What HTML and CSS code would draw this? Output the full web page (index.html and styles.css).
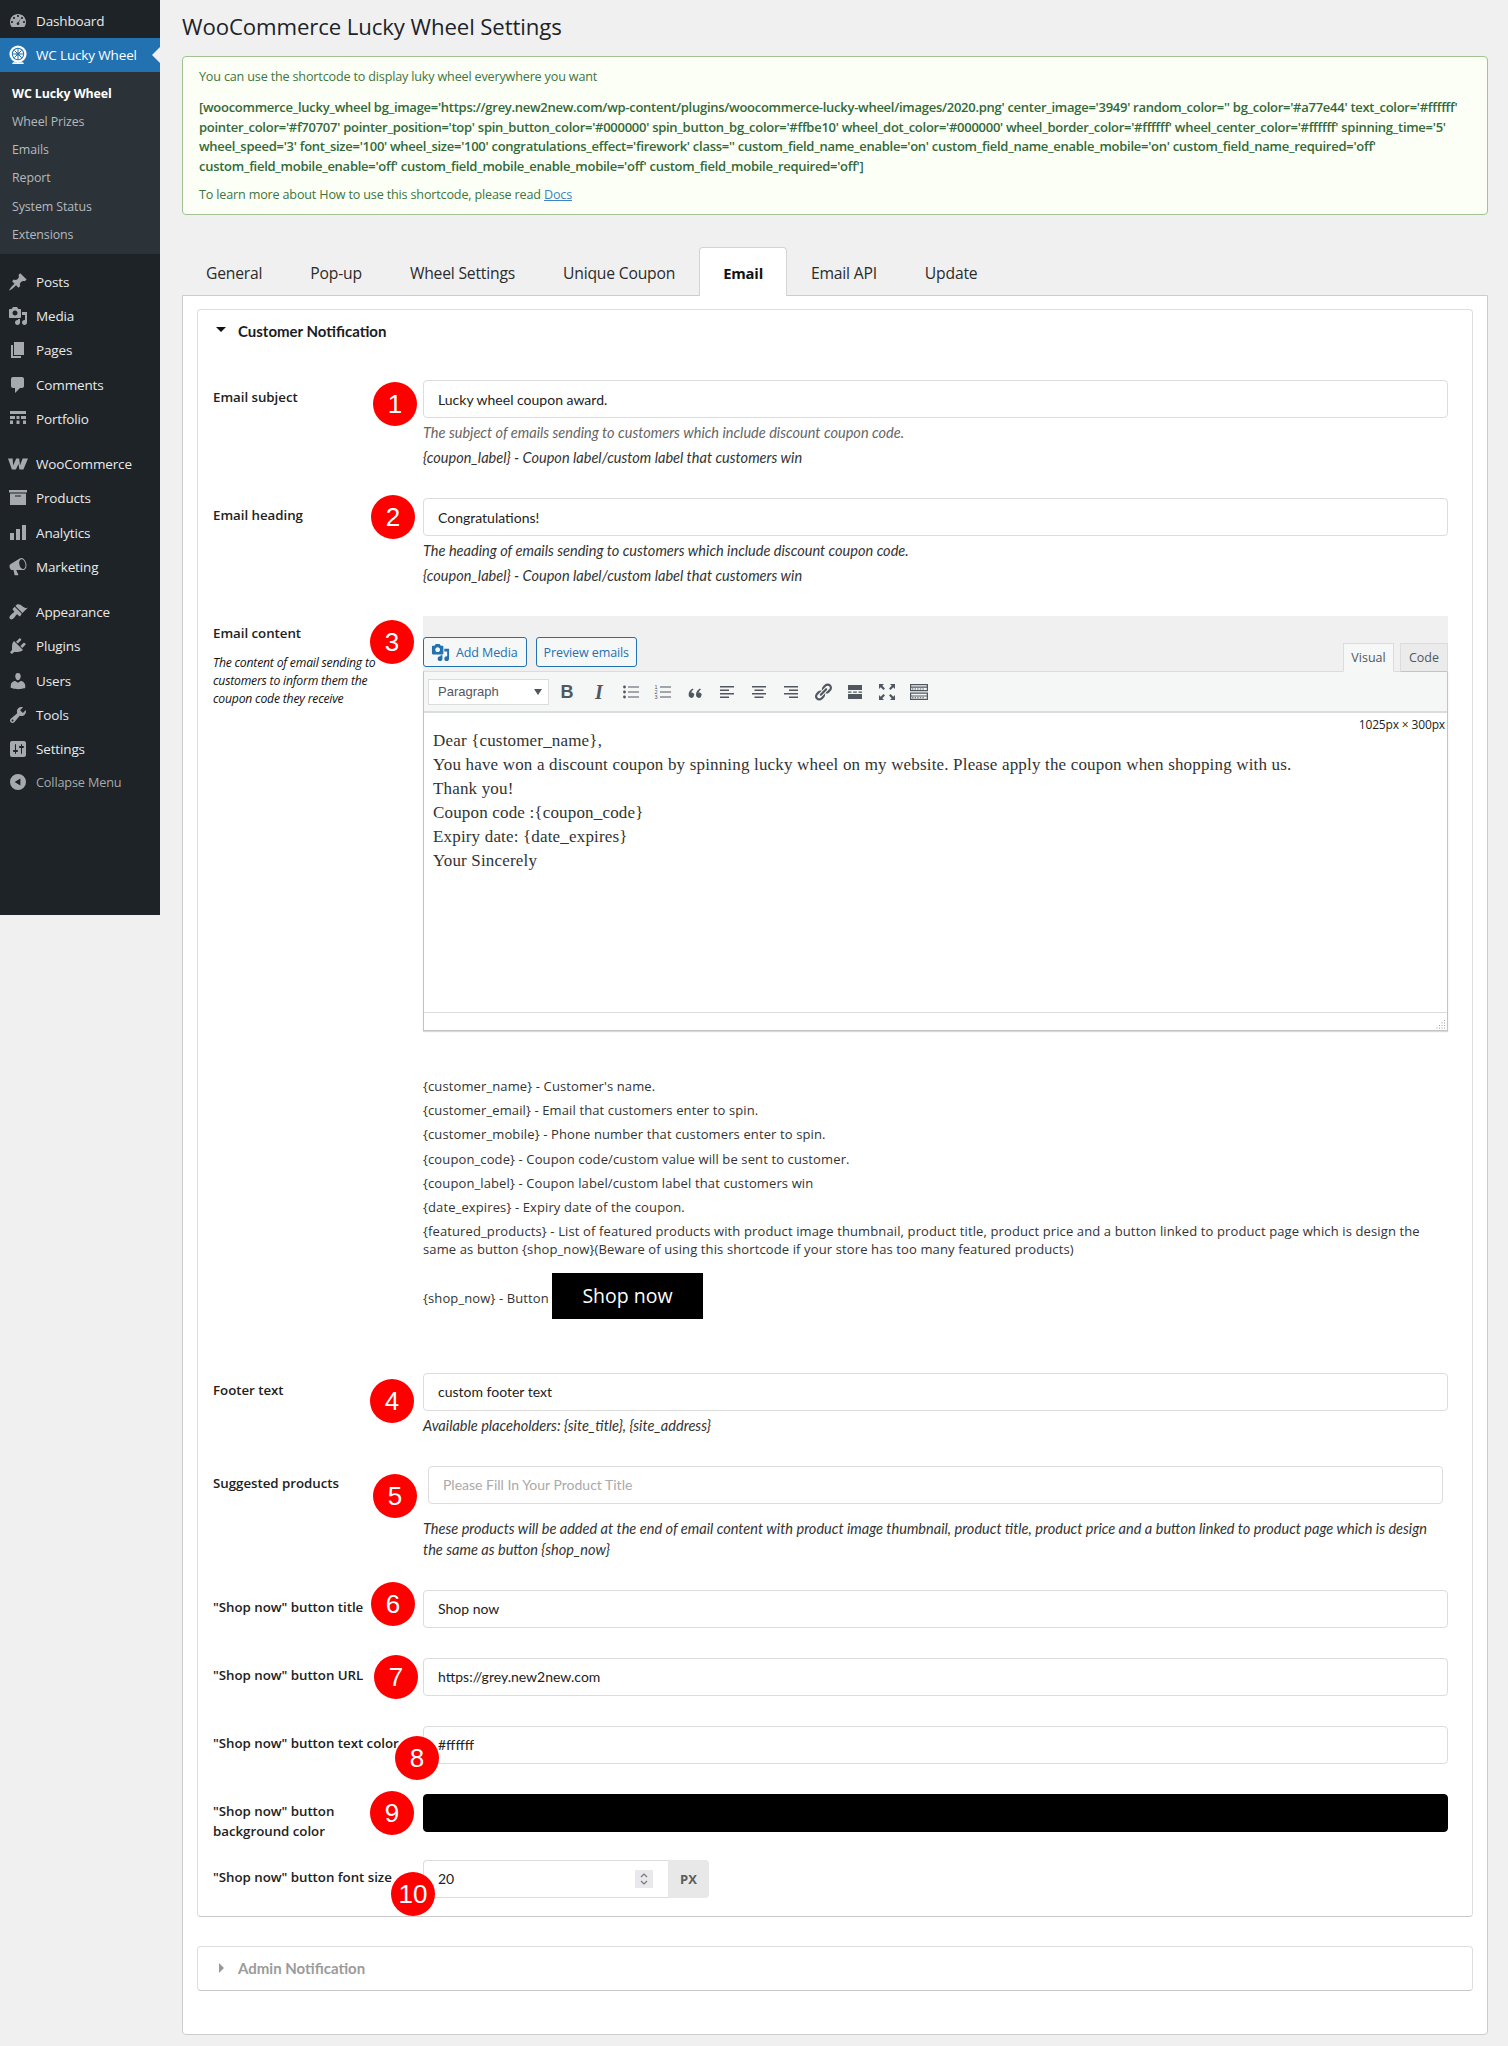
FILE: index.html
```html
<!DOCTYPE html>
<html lang="en">
<head>
<meta charset="utf-8">
<title>WooCommerce Lucky Wheel Settings</title>
<link rel="stylesheet" href="styles.css">
</head>
<body>
<aside class="sidebar">
  <nav class="menu">
    <a class="item"><svg class="ico" viewBox="0 0 20 20"><path fill-rule="evenodd" d="M3.76 16h12.48c1.1-1.37 1.76-3.11 1.76-5 0-4.42-3.58-8-8-8s-8 3.58-8 8c0 1.89.66 3.63 1.76 5zM10 4c.55 0 1 .45 1 1s-.45 1-1 1-1-.45-1-1 .45-1 1-1zM6 6c.55 0 1 .45 1 1s-.45 1-1 1-1-.45-1-1 .45-1 1-1zm8 0c.55 0 1 .45 1 1s-.45 1-1 1-1-.45-1-1 .45-1 1-1zM4 10c.55 0 1 .45 1 1s-.45 1-1 1-1-.45-1-1 .45-1 1-1zm12 0c.55 0 1 .45 1 1s-.45 1-1 1-1-.45-1-1 .45-1 1-1zM13 7l-2.2 4.6c.5.4.7 1 .5 1.6-.3.7-1.1 1-1.8.7-.7-.3-1-1.1-.7-1.8.2-.6.8-.9 1.4-.8z"/></svg>Dashboard</a>
    <a class="item item-active"><svg class="ico ico-wheel" viewBox="0 0 20 20"><circle cx="10" cy="9" r="8.6" fill="#fff"/><circle cx="10" cy="9" r="6.2" fill="#2271b1"/><circle cx="10" cy="9" r="5.2" fill="#fff"/><path d="M10 3.8v10.4M4.8 9h10.4M6.3 5.3l7.4 7.4M13.7 5.3l-7.4 7.4" stroke="#2271b1" stroke-width="1"/><circle cx="10" cy="9" r="1.5" fill="#2271b1"/><path d="M5 17.2h10l1 1.8H4z" fill="#fff"/></svg>WC Lucky Wheel</a>
    <ul class="submenu">
      <li class="sub-current">WC Lucky Wheel</li>
      <li>Wheel Prizes</li>
      <li>Emails</li>
      <li>Report</li>
      <li>System Status</li>
      <li>Extensions</li>
    </ul>
    <a class="item"><svg class="ico" viewBox="0 0 20 20"><path d="M10.44 3.02l1.82-1.82 6.36 6.35-1.83 1.82c-1.05-.68-2.48-.57-3.41.36l-.75.75c-.92.93-1.04 2.35-.35 3.41l-1.83 1.82-2.41-2.41-2.8 2.79c-.42.42-3.38 2.71-3.8 2.29s1.86-3.39 2.28-3.81l2.79-2.79L4.1 9.36l1.83-1.82c1.05.69 2.48.57 3.4-.36l.75-.75c.93-.92 1.05-2.35.36-3.41z"/></svg>Posts</a>
    <a class="item"><svg class="ico" viewBox="0 0 20 20"><path fill-rule="evenodd" d="M13 11V4c0-.55-.45-1-1-1h-1.67L9 1H5L3.67 3H2c-.55 0-1 .45-1 1v7c0 .55.45 1 1 1h10c.55 0 1-.45 1-1zM7 4.5c1.38 0 2.5 1.12 2.5 2.5S8.38 9.5 7 9.5 4.5 8.38 4.5 7 5.62 4.5 7 4.5zM14 6h5v10.5c0 1.38-1.12 2.5-2.5 2.5S14 17.88 14 16.5s1.12-2.5 2.5-2.5c.17 0 .34.02.5.05V9h-3V6zm-4 8.05V13h2v3.5c0 1.38-1.12 2.5-2.5 2.5S7 17.88 7 16.5 8.12 14 9.5 14c.17 0 .34.02.5.05z"/></svg>Media</a>
    <a class="item"><svg class="ico" viewBox="0 0 20 20"><path d="M6 15V2h10v13H6zm-1 1h8v2H3V5h2v11z"/></svg>Pages</a>
    <a class="item"><svg class="ico" viewBox="0 0 20 20"><path d="M5 2h9c1.1 0 2 .9 2 2v7c0 1.1-.9 2-2 2h-2l-5 5v-5H5c-1.1 0-2-.9-2-2V4c0-1.1.9-2 2-2z"/></svg>Comments</a>
    <a class="item"><svg class="ico" viewBox="0 0 20 20"><path d="M2 2h16v3H2zM2 7h5v3H2zM8.5 7h3v3h-3zM13 7h5v3h-5zM2 11.5h3V15H2zM8.5 11.5h3V15h-3zM15 11.5h3V15h-3z"/></svg>Portfolio</a>
    <a class="item item-group"><svg class="ico" viewBox="0 0 20 20"><path d="M0 4.5h4.6l.6 7 3-7h3l.8 7 2.6-7H20l-4.6 11h-4l-.9-5.6-2.6 5.6h-4z"/></svg>WooCommerce</a>
    <a class="item"><svg class="ico" viewBox="0 0 20 20"><path fill-rule="evenodd" d="M19 2v2.4H1V2h18zM2 5.4h16V17H2V5.4zm11 3V7.4H7v1h6z"/></svg>Products</a>
    <a class="item"><svg class="ico" viewBox="0 0 20 20"><path d="M2 10h4v7H2zM8 6h4v11H8zM14 2h4v15h-4z"/></svg>Analytics</a>
    <a class="item"><svg class="ico" viewBox="0 0 20 20"><path fill-rule="evenodd" d="M18.15 5.94c.46 1.62.38 3.22-.02 4.48-.42 1.28-1.26 2.18-2.3 2.48-.16.06-.26.06-.4.06-.06.02-.12.02-.18.02-.06.02-.14.02-.22.02H8.2l2.2 4.7c.02.14-.06.26-.14.34-.08.1-.24.16-.34.16H6.95c-.1 0-.26-.06-.34-.16-.08-.08-.16-.2-.14-.34l-1-4.7H4.25c-.5.06-1.08-.18-1.54-.62s-.88-1.08-1.06-1.88c-.24-.8-.2-1.56-.02-2.2.18-.62.58-1.08 1.06-1.3l9-5.4c.1-.06.18-.1.24-.16.06-.04.14-.08.24-.12.16-.08.28-.12.5-.18 1.04-.3 2.24.1 3.22 1 .98.88 1.84 2.24 2.26 3.86zm-2.58 5.98c.4-.1.74-.34 1.04-.7.58-.7.86-1.76.86-3.04-.02-.64-.12-1.3-.3-1.96-.2-.66-.46-1.28-.78-1.82-.34-.56-.74-1.02-1.18-1.38-.44-.34-.9-.56-1.38-.66-.32-.04-.62-.02-.9.08-.34.1-.62.32-.86.62-.6.7-.88 1.76-.88 3.04.02.64.12 1.3.3 1.96.2.66.46 1.28.78 1.82.34.56.74 1.02 1.18 1.38.44.34.9.56 1.38.66.32.04.62.02.74-.04z"/></svg>Marketing</a>
    <a class="item item-group"><svg class="ico" viewBox="0 0 20 20"><path d="M14.48 11.06L7.41 3.99l1.5-1.5c.5-.56 2.3-.47 3.51.32 1.21.8 1.43 1.28 2.91 2.1 1.18.64 2.45 1.26 4.45.85zm-.71.71L6.7 4.7 4.93 6.47c-.39.39-.39 1.02 0 1.41l1.06 1.06c.39.39.39 1.03 0 1.42-.6.6-1.43 1.11-2.21 1.69-.35.26-.7.53-1.01.84-1.34 1.34-1.86 2.92-.81 3.98 1.05 1.05 2.64.53 3.98-.81.31-.31.58-.66.84-1.01.58-.78 1.09-1.61 1.69-2.21.39-.39 1.02-.39 1.41 0l1.06 1.06c.39.39 1.02.39 1.41 0z"/></svg>Appearance</a>
    <a class="item"><svg class="ico" viewBox="0 0 20 20"><path d="M13.11 4.36L9.87 7.6 8 5.73l3.24-3.24c.35-.34 1.05-.2 1.56.32.52.51.66 1.21.31 1.55zm-8 1.77l.91-1.12 9.01 9.01-1.19.84c-.71.71-2.63 1.16-3.82 1.16H6.14L4.9 17.26c-.59.59-1.54.59-2.12 0-.59-.58-.59-1.53 0-2.12l1.24-1.24v-3.88c0-1.13.4-3.19 1.09-3.89zm7.26 3.97l3.24-3.24c.34-.35 1.04-.21 1.55.31.52.51.66 1.21.31 1.55l-3.24 3.25z"/></svg>Plugins</a>
    <a class="item"><svg class="ico" viewBox="0 0 20 20"><path d="M10 9.25c-2.27 0-2.73-3.44-2.73-3.44C7 4.02 7.82 2 9.97 2c2.16 0 2.98 2.02 2.71 3.81 0 0-.41 3.44-2.68 3.44zm0 2.57L12.72 10c2.39 0 4.52 2.33 4.52 4.53v2.49s-3.65 1.13-7.24 1.13c-3.65 0-7.24-1.13-7.24-1.13v-2.49c0-2.25 1.94-4.48 4.47-4.48z"/></svg>Users</a>
    <a class="item"><svg class="ico" viewBox="0 0 20 20"><path fill-rule="evenodd" d="M16.68 9.77c-1.34 1.34-3.3 1.67-4.95.99l-5.41 6.52c-.99.99-2.59.99-3.58 0s-.99-2.59 0-3.57l6.52-5.42c-.68-1.65-.35-3.61.99-4.95 1.28-1.28 3.12-1.62 4.72-1.06l-2.89 2.89 2.82 2.82 2.86-2.87c.53 1.58.18 3.39-1.08 4.65zM3.81 16.21c.4.39 1.04.39 1.43 0 .4-.4.4-1.04 0-1.43-.39-.4-1.03-.4-1.43 0-.39.39-.39 1.03 0 1.43z"/></svg>Tools</a>
    <a class="item"><svg class="ico" viewBox="0 0 20 20"><path fill-rule="evenodd" d="M18 16V4c0-1.1-.9-2-2-2H4c-1.1 0-2 .9-2 2v12c0 1.1.9 2 2 2h12c1.1 0 2-.9 2-2zM8 11h1c.55 0 1 .45 1 1s-.45 1-1 1H8v1.5c0 .28-.22.5-.5.5s-.5-.22-.5-.5V13H6c-.55 0-1-.45-1-1s.45-1 1-1h1V5.5c0-.28.22-.5.5-.5s.5.22.5.5V11zm5-2h-1c-.55 0-1-.45-1-1s.45-1 1-1h1V5.5c0-.28.22-.5.5-.5s.5.22.5.5V7h1c.55 0 1 .45 1 1s-.45 1-1 1h-1v5.5c0 .28-.22.5-.5.5s-.5-.22-.5-.5V9z"/></svg>Settings</a>
    <a class="item item-collapse"><svg class="ico" viewBox="0 0 20 20"><path fill-rule="evenodd" d="M10 2a8 8 0 1 1 0 16 8 8 0 0 1 0-16zM12.4 13.6V6.4L6.6 10z"/></svg>Collapse Menu</a>
  </nav>
</aside>

<main class="content">
  <h1 class="title">WooCommerce Lucky Wheel Settings</h1>

  <section class="notice">
    <p class="notice-line">You can use the shortcode to display luky wheel everywhere you want</p>
    <p class="notice-code">[woocommerce_lucky_wheel bg_image='https://grey.new2new.com/wp-content/plugins/woocommerce-lucky-wheel/images/2020.png' center_image='3949' random_color='' bg_color='#a77e44' text_color='#ffffff' pointer_color='#f70707' pointer_position='top' spin_button_color='#000000' spin_button_bg_color='#ffbe10' wheel_dot_color='#000000' wheel_border_color='#ffffff' wheel_center_color='#ffffff' spinning_time='5' wheel_speed='3' font_size='100' wheel_size='100' congratulations_effect='firework' class='' custom_field_name_enable='on' custom_field_name_enable_mobile='on' custom_field_name_required='off' custom_field_mobile_enable='off' custom_field_mobile_enable_mobile='off' custom_field_mobile_required='off']</p>
    <p class="notice-line">To learn more about How to use this shortcode, please read <a class="docs">Docs</a></p>
  </section>

  <div class="tabs">
    <a class="tab">General</a>
    <a class="tab">Pop-up</a>
    <a class="tab">Wheel Settings</a>
    <a class="tab">Unique Coupon</a>
    <a class="tab tab-active">Email</a>
    <a class="tab">Email API</a>
    <a class="tab">Update</a>
  </div>

  <div class="panel">
    <section class="accordion">
      <h2 class="acc-title"><span class="arrow-down"></span>Customer Notification</h2>

      <div class="row">
        <label class="lbl">Email subject</label>
        <div class="fld">
          <input class="inp" value="Lucky wheel coupon award.">
          <p class="help help-grey">The subject of emails sending to customers which include discount coupon code.</p>
          <p class="help">{coupon_label} - Coupon label/custom label that customers win</p>
        </div>
        <span class="badge b1">1</span>
      </div>

      <div class="row">
        <label class="lbl">Email heading</label>
        <div class="fld">
          <input class="inp" value="Congratulations!">
          <p class="help">The heading of emails sending to customers which include discount coupon code.</p>
          <p class="help">{coupon_label} - Coupon label/custom label that customers win</p>
        </div>
        <span class="badge b2">2</span>
      </div>

      <div class="row row-editor">
        <div class="lbl">Email content
          <p class="lbl-desc">The content of email sending to customers to inform them the coupon code they receive</p>
        </div>
        <div class="fld">
          <div class="editor">
            <div class="editor-top">
              <div class="media-btns">
                <a class="wpbtn"><svg class="btn-ico" viewBox="0 0 20 20"><path fill-rule="evenodd" d="M13 11V4c0-.55-.45-1-1-1h-1.67L9 1H5L3.67 3H2c-.55 0-1 .45-1 1v7c0 .55.45 1 1 1h10c.55 0 1-.45 1-1zM7 4.5c1.38 0 2.5 1.12 2.5 2.5S8.38 9.5 7 9.5 4.5 8.38 4.5 7 5.62 4.5 7 4.5zM14 6h5v10.5c0 1.38-1.12 2.5-2.5 2.5S14 17.88 14 16.5s1.12-2.5 2.5-2.5c.17 0 .34.02.5.05V9h-3V6zm-4 8.05V13h2v3.5c0 1.38-1.12 2.5-2.5 2.5S7 17.88 7 16.5 8.12 14 9.5 14c.17 0 .34.02.5.05z"/></svg>Add Media</a>
                <a class="wpbtn wpbtn-plain">Preview emails</a>
              </div>
              <div class="mode-tabs">
                <span class="mode mode-on">Visual</span>
                <span class="mode">Code</span>
              </div>
            </div>
            <div class="editor-box">
              <div class="toolbar">
                <div class="fmt-select">Paragraph<span class="fmt-caret"></span></div>
                <span class="tb tb-b">B</span>
                <span class="tb tb-i">I</span>
                <svg class="tb" viewBox="0 0 20 20"><circle cx="3.5" cy="5" r="1.4"/><circle cx="3.5" cy="10" r="1.4"/><circle cx="3.5" cy="15" r="1.4"/><path d="M7 4.5h11v1H7zM7 9.5h11v1H7zM7 14.5h11v1H7z"/></svg>
                <svg class="tb" viewBox="0 0 20 20"><text x="1.5" y="7" class="tb-num">1</text><text x="1.5" y="12.2" class="tb-num">2</text><text x="1.5" y="17.4" class="tb-num">3</text><path d="M7 4.5h11v1H7zM7 9.5h11v1H7zM7 14.5h11v1H7z"/></svg>
                <svg class="tb" viewBox="0 0 20 20"><path d="M9.4 13.2c0-.7-.2-1.3-.7-1.8s-1-.8-1.7-.8c-.3 0-.6.1-1 .2.1-.5.5-1.1 1-1.8.5-.6 1.1-1.1 1.6-1.4L7.5 6.4C6.4 7 5.4 7.9 4.7 9.1S3.6 11.4 3.6 12.8c0 1 .3 1.7.8 2.3.6.5 1.2.8 2 .8.7 0 1.3-.2 1.8-.7s.7-1.2.7-2zM16.8 13.2c0-.7-.2-1.3-.7-1.8s-1-.8-1.7-.8c-.3 0-.6.1-1 .2.1-.5.5-1.1 1-1.8.5-.6 1.1-1.1 1.6-1.4l-1.1-1.2c-1.1.6-2.1 1.5-2.8 2.7s-1.1 2.3-1.1 3.7c0 1 .3 1.7.8 2.3.6.5 1.2.8 2 .8.7 0 1.3-.2 1.8-.7s.7-1.2.7-2z"/></svg>
                <svg class="tb" viewBox="0 0 20 20"><path d="M3 4h14v1.5H3zM3 7.5h9V9H3zM3 11h14v1.5H3zM3 14.5h9V16H3z"/></svg>
                <svg class="tb" viewBox="0 0 20 20"><path d="M3 4h14v1.5H3zM5.5 7.5h9V9h-9zM3 11h14v1.5H3zM5.5 14.5h9V16h-9z"/></svg>
                <svg class="tb" viewBox="0 0 20 20"><path d="M3 4h14v1.5H3zM8 7.5h9V9H8zM3 11h14v1.5H3zM8 14.5h9V16H8z"/></svg>
                <svg class="tb" viewBox="0 0 20 20"><path d="M17.74 2.76c1.68 1.69 1.68 4.41 0 6.1l-1.53 1.52c-1.12 1.12-2.7 1.47-4.14 1.09l2.62-2.61.76-.77.76-.76c.84-.84.84-2.2 0-3.04-.84-.85-2.2-.85-3.04 0l-.77.76-3.38 3.38c-.37-1.44-.02-3.02 1.1-4.14l1.52-1.53c1.69-1.68 4.42-1.68 6.1 0zM8.59 13.43l5.34-5.34c.42-.42.42-1.1 0-1.52-.44-.43-1.13-.39-1.53 0l-5.33 5.34c-.42.42-.42 1.1 0 1.52.44.43 1.13.39 1.52 0zm-.76 2.29l4.14-4.15c.38 1.44.03 3.02-1.09 4.14l-1.52 1.53c-1.69 1.68-4.41 1.68-6.1 0-1.68-1.68-1.68-4.42 0-6.1l1.53-1.52c1.12-1.12 2.7-1.47 4.14-1.1l-4.14 4.15c-.85.84-.85 2.2 0 3.05.84.84 2.2.84 3.04 0z"/></svg>
                <svg class="tb" viewBox="0 0 20 20"><path d="M3 3h14v5H3zM3 9.5h3.5v1.2H3zM8.2 9.5h3.6v1.2H8.2zM13.5 9.5H17v1.2h-3.5zM3 12h14v5H3z"/></svg>
                <svg class="tb" viewBox="0 0 20 20"><path d="M2 2h5L5.3 3.7 8 6.4 6.4 8 3.7 5.3 2 7zM18 2v5l-1.7-1.7L13.6 8 12 6.4l2.7-2.7L13 2zM2 18v-5l1.7 1.7L6.4 12 8 13.6l-2.7 2.7L7 18zM18 18h-5l1.7-1.7-2.7-2.7 1.6-1.6 2.7 2.7L18 13z"/></svg>
                <svg class="tb" viewBox="0 0 20 20"><path fill-rule="evenodd" d="M1 2h18v7.3H1zM2.2 3.2v1.4h15.6V3.2zM2.2 5.8v2.3h15.6V5.8zM1 10.6h18V18H1zM2.2 11.8v1.6h15.6v-1.6zM2.2 14.6v2.2h15.6v-2.2z"/><path d="M3 6.4h1.4v1H3zM5.6 6.4H7v1H5.6zM8.2 6.4h1.4v1H8.2zM10.8 6.4h1.4v1h-1.4zM13.4 6.4h1.4v1h-1.4zM3 15.2h1.4v1H3zM5.6 15.2H7v1H5.6zM8.2 15.2h1.4v1H8.2zM10.8 15.2h1.4v1h-1.4zM13.4 15.2h1.4v1h-1.4z"/></svg>
              </div>
              <div class="doc">
                <span class="dims">1025px × 300px</span>
                <p>Dear {customer_name},</p>
                <p>You have won a discount coupon by spinning lucky wheel on my website. Please apply the coupon when shopping with us.</p>
                <p>Thank you!</p>
                <p>Coupon code :{coupon_code}</p>
                <p>Expiry date: {date_expires}</p>
                <p>Your Sincerely</p>
              </div>
              <div class="statusbar"><svg class="grip" viewBox="0 0 10 10"><path d="M9 1v1H8V1zM9 3.5v1H8v-1zM6.5 3.5v1h-1v-1zM9 6v1H8V6zM6.5 6v1h-1V6zM4 6v1H3V6zM9 8.5v1H8v-1zM6.5 8.5v1h-1v-1zM4 8.5v1H3v-1zM1.5 8.5v1H.5v-1z"/></svg></div>
            </div>
          </div>
          <div class="shortcodes">
            <p>{customer_name} - Customer's name.</p>
            <p>{customer_email} - Email that customers enter to spin.</p>
            <p>{customer_mobile} - Phone number that customers enter to spin.</p>
            <p>{coupon_code} - Coupon code/custom value will be sent to customer.</p>
            <p>{coupon_label} - Coupon label/custom label that customers win</p>
            <p>{date_expires} - Expiry date of the coupon.</p>
            <p>{featured_products} - List of featured products with product image thumbnail, product title, product price and a button linked to product page which is design the same as button {shop_now}(Beware of using this shortcode if your store has too many featured products)</p>
            <p class="shop-line">{shop_now} - Button <a class="shop-btn">Shop now</a></p>
          </div>
        </div>
        <span class="badge b3">3</span>
      </div>

      <div class="row">
        <label class="lbl">Footer text</label>
        <div class="fld">
          <input class="inp" value="custom footer text">
          <p class="help">Available placeholders: {site_title}, {site_address}</p>
        </div>
        <span class="badge b4">4</span>
      </div>

      <div class="row">
        <label class="lbl">Suggested products</label>
        <div class="fld">
          <div class="inset"><input class="inp" placeholder="Please Fill In Your Product Title"></div>
          <p class="help help-wide">These products will be added at the end of email content with product image thumbnail, product title, product price and a button linked to product page which is design the same as button {shop_now}</p>
        </div>
        <span class="badge b5">5</span>
      </div>

      <div class="row">
        <label class="lbl">"Shop now" button title</label>
        <div class="fld"><input class="inp" value="Shop now"></div>
        <span class="badge b6">6</span>
      </div>

      <div class="row">
        <label class="lbl">"Shop now" button URL</label>
        <div class="fld"><input class="inp" value="https://grey.new2new.com"></div>
        <span class="badge b7">7</span>
      </div>

      <div class="row">
        <label class="lbl">"Shop now" button text color</label>
        <div class="fld"><input class="inp" value="#ffffff"></div>
        <span class="badge b8">8</span>
      </div>

      <div class="row row-tight">
        <label class="lbl">"Shop now" button<br>background color</label>
        <div class="fld"><input class="inp inp-black" value=""></div>
        <span class="badge b9">9</span>
      </div>

      <div class="row row-last">
        <label class="lbl">"Shop now" button font size</label>
        <div class="fld">
          <div class="num-group">
            <input class="inp inp-num" value="20">
            <span class="spinner"><svg viewBox="0 0 18 18"><path d="M6 7l3-3 3 3M6 11l3 3 3-3" fill="none" stroke="#777" stroke-width="1.2"/></svg></span>
            <span class="unit">PX</span>
          </div>
        </div>
        <span class="badge b10">10</span>
      </div>
    </section>

    <section class="accordion accordion-closed">
      <h2 class="acc-title acc-title-off"><span class="arrow-right"></span>Admin Notification</h2>
    </section>
  </div>
</main>
</body>
</html>
```
FILE: styles.css
```css
* { box-sizing: border-box; }
html, body { margin: 0; padding: 0; }
body {
  display: flex;
  align-items: flex-start;
  background: #f0f0f1;
  font-family: "Open Sans", "Noto Sans", sans-serif;
  color: #1d2327;
}

/* sidebar */
.sidebar { flex: 0 0 160px; height: 915px; background: #1d2327; padding-top: 4px; }
.menu { display: flex; flex-direction: column; }
.item {
  display: flex; align-items: center; height: 34.25px;
  color: #e8eaeb; font-size: 13.5px; letter-spacing: -.15px;
}
.ico { flex: 0 0 20px; width: 20px; height: 20px; margin: 0 8px; fill: #a7aaad; }
.item-active { background: #2271b1; color: #fff; position: relative; height: 34px; }
.item-active::after {
  content: ""; position: absolute; right: 0; top: 9px;
  border: 8px solid transparent; border-right-color: #f0f0f1; border-left-width: 0;
}
.ico-wheel { fill: none; }
.item-group { margin-top: 11px; }
.item-collapse { height: 32px; color: #a7aaad; font-size: 12.7px; }
.submenu {
  list-style: none; margin: 0 0 10.5px; padding: 7.5px 0 6px 12px; background: #2c3338;
  height: 182px; color: #b4b9be; font-size: 12.4px; letter-spacing: -.1px;
}
.submenu li { height: 28.2px; line-height: 28px; }
.sub-current { color: #fff; font-weight: 700; }

/* page */
.content { flex: 1; min-width: 0; padding: 9px 20px 13px 22px; }
.title { margin: 0; font-size: 22.2px; font-weight: 400; line-height: 36px; letter-spacing: -.1px; color: #1d2327; }

.notice {
  margin-top: 11px; padding: 10px 16px; height: 159px;
  background: #fcfff5; border: 1px solid #a3c293; border-radius: 4px;
  color: #3d7540; font-size: 12.6px; line-height: 19.5px; letter-spacing: -.17px;
}
.notice-line { margin: 0; }
.notice-code { margin: 11.5px 0 8.5px; font-size: 13px; font-weight: 600; letter-spacing: -.27px; color: #33693a; }
.docs { color: #4183c4; text-decoration: underline; }

.tabs { display: flex; margin-top: 32px; position: relative; z-index: 1; }
.tab {
  padding: 14.5px 23px 12.5px; border: 1px solid transparent; border-bottom: 0;
  font-size: 15.7px; line-height: 20px; letter-spacing: -.2px; color: #2b2b2b;
}
.tab-active {
  background: #fff; border-color: #d4d4d5; border-radius: 4px 4px 0 0;
  font-size: 14.8px; font-weight: 700; padding-bottom: 13.5px; margin-bottom: -1px; color: #111;
}
.panel {
  background: #fff; border: 1px solid #ccc; border-radius: 0 0 4px 4px;
  padding: 13px 14px 43px;
}
.accordion {
  border: 1px solid #dedede; border-bottom-color: #c8c8c8; border-radius: 4px;
  padding: 0 24px 18px 15px;
}
.acc-title {
  position: relative; margin: 0 0 38px; padding: 10px 0 0 25px;
  font-family: Lato, sans-serif; font-size: 15px; line-height: 22px; font-weight: 700; color: #1b1c1d;
}
.arrow-down {
  position: absolute; left: 3px; top: 17px;
  border: 5px solid transparent; border-top: 5px solid #111; border-bottom: 0;
}
.arrow-right {
  position: absolute; left: 6px; top: 16px;
  border: 5px solid transparent; border-left: 5px solid #999; border-right: 0;
}
.accordion-closed { margin-top: 29px; padding-bottom: 11px; }
.accordion-closed .acc-title { margin: 0; }
.acc-title-off { color: #9b9b9b; }

/* rows */
.row { position: relative; display: flex; margin-bottom: 30px; }
.row-tight { margin-bottom: 28px; }
.row-last { margin-bottom: 0; }
.row-editor { margin-bottom: 54px; }
.lbl {
  flex: 0 0 210px; height: 38px; padding: 7px 10px 0 0;
  font-size: 13.3px; line-height: 20px; font-weight: 600; color: #212121; letter-spacing: -.03px;
}
.lbl-desc {
  margin: 11px 4px 0 0; font-size: 12.2px; line-height: 18px; font-weight: 400; font-style: italic; color: #111; letter-spacing: -.2px;
}
.fld { flex: 1; min-width: 0; }
.inp {
  display: block; width: 100%; height: 38px; padding: 0 14px;
  border: 1px solid #dcdcdc; border-radius: 4px; outline: 0; background: #fff;
  font-family: Lato, sans-serif; font-size: 14px; color: #222;
}
.inp::placeholder { color: #aaa; opacity: 1; }
.inp-black { background: #000; border-color: #000; }
.inset { padding: 0 5px; }
.help {
  margin: 5px 0 6px; font-family: Lato, sans-serif; font-style: italic;
  font-size: 14.55px; line-height: 19px; color: #333;
}
.help-grey { color: #666; }
.row .help:last-child { margin-bottom: 1px; }
.row .help-wide:last-child { margin: 14px 0 0; line-height: 21px; }

/* number */
.num-group { position: relative; display: flex; width: 286px; height: 38px; }
.inp-num { flex: 1; min-width: 0; width: auto; border-radius: 4px 0 0 4px; border-right: 0; }
.spinner {
  position: absolute; left: 212px; top: 10px; width: 18px; height: 18px; background: #e9e9ed;
}
.spinner svg { display: block; width: 18px; height: 18px; }
.unit {
  flex: 0 0 41px; display: flex; align-items: center; justify-content: center;
  background: #e8e8e8; border-radius: 0 4px 4px 0;
  font-size: 13px; font-weight: 700; color: #5c5c5c;
}

/* badges */
.badge {
  position: absolute; width: 44px; height: 44px; border-radius: 50%;
  background: #fe0000; color: #fff;
  display: flex; align-items: center; justify-content: center;
  font-family: "Liberation Sans", Arial, sans-serif; font-size: 26px; line-height: 1;
}
.b1 { left: 160px; top: 2px; }
.b2 { left: 158px; top: -3px; }
.b3 { left: 157px; top: 4px; }
.b4 { left: 157px; top: 6px; }
.b5 { left: 160px; top: 8px; }
.b6 { left: 158px; top: -8px; }
.b7 { left: 161px; top: -3px; }
.b8 { left: 182px; top: 10px; }
.b9 { left: 157px; top: -3px; }
.b10 { left: 178px; top: 12px; }

/* editor */
.editor { font-family: "Open Sans", sans-serif; }
.editor-top {
  display: flex; justify-content: space-between; align-items: flex-end;
  height: 55px; background: #f0f0f0;
}
.media-btns { display: flex; gap: 9px; padding-bottom: 4px; }
.wpbtn {
  display: flex; align-items: center; height: 30px; padding: 0 8px 0 7px;
  border: 1px solid #2271b1; border-radius: 3px; background: #f6f7f7;
  color: #2271b1; font-size: 12.5px; letter-spacing: -.1px;
}
.wpbtn-plain { padding: 0 7px; }
.btn-ico { width: 19px; height: 19px; margin: 0 6px 0 0; fill: #2271b1; }
.mode-tabs { display: flex; gap: 6px; position: relative; top: 1px; }
.mode {
  height: 29px; width: 48px; display: flex; align-items: center; justify-content: center;
  background: #ebebeb; border: 1px solid #dcdcde; border-bottom-color: #c3c4c7;
  font-size: 12.5px; color: #50575e;
}
.mode-on { width: 51px; background: #f6f7f7; border-bottom-color: #f6f7f7; }
.editor-box {
  border: 1px solid #c3c4c7; border-top: 1px solid #dcdcde; background: #fff;
  box-shadow: 0 1px 1px rgba(0, 0, 0, .15);
}
.toolbar {
  display: flex; align-items: center; height: 41px; padding: 0 0 0 4px;
  background: #f5f6f6; border-bottom: 2px solid #dcdcde; color: #50575e;
}
.fmt-select {
  position: relative; width: 121px; height: 26px; margin-right: 8px; padding-left: 9px;
  background: #fff; border: 1px solid #dcdcde;
  font-family: "Liberation Sans", Arial, sans-serif; font-size: 13px; line-height: 24px; color: #50575e;
}
.fmt-caret {
  position: absolute; right: 6px; top: 9px;
  border: 4px solid transparent; border-top: 6px solid #50575e; border-bottom: 0;
}
.tb { flex: 0 0 20px; width: 20px; height: 20px; margin-right: 12px; fill: #50575e; }
.tb-b, .tb-i {
  display: flex; align-items: center; justify-content: center;
  font-family: "Liberation Sans", Arial, sans-serif; font-size: 18px; line-height: 20px; font-weight: 700;
}
.tb-i { font-family: "Liberation Serif", serif; font-style: italic; font-size: 20px; }
.tb-num { font-family: "Liberation Sans", sans-serif; font-size: 5.5px; }
.doc {
  position: relative; height: 300px; padding: 16px 8px 0 9px;
  font-family: "Liberation Serif", serif; font-size: 17px; line-height: 24px; color: #333;
  letter-spacing: .17px; border-bottom: 1px solid #dcdcde;
}
.doc p { margin: 0; }
.dims {
  position: absolute; right: 2px; top: 3px;
  font-family: "Open Sans", sans-serif; font-size: 12px; line-height: 18px; letter-spacing: -.15px; color: #222;
}
.statusbar { position: relative; height: 17px; }
.grip { position: absolute; right: 1px; bottom: 1px; width: 10px; height: 10px; fill: #a0a5aa; }

/* shortcode list */
.shortcodes {
  margin-top: 46px; font-size: 13px; line-height: 18.2px; letter-spacing: .12px; color: #333;
}
.shortcodes p { margin: 0 0 6px; }
.shortcodes .shop-line { margin: 14px 0 0; }
.shop-btn {
  display: inline-block; height: 46px; padding: 10px 30px;
  background: #000; color: #fff; font-size: 19.5px; line-height: 26px; letter-spacing: 0;
}
```
